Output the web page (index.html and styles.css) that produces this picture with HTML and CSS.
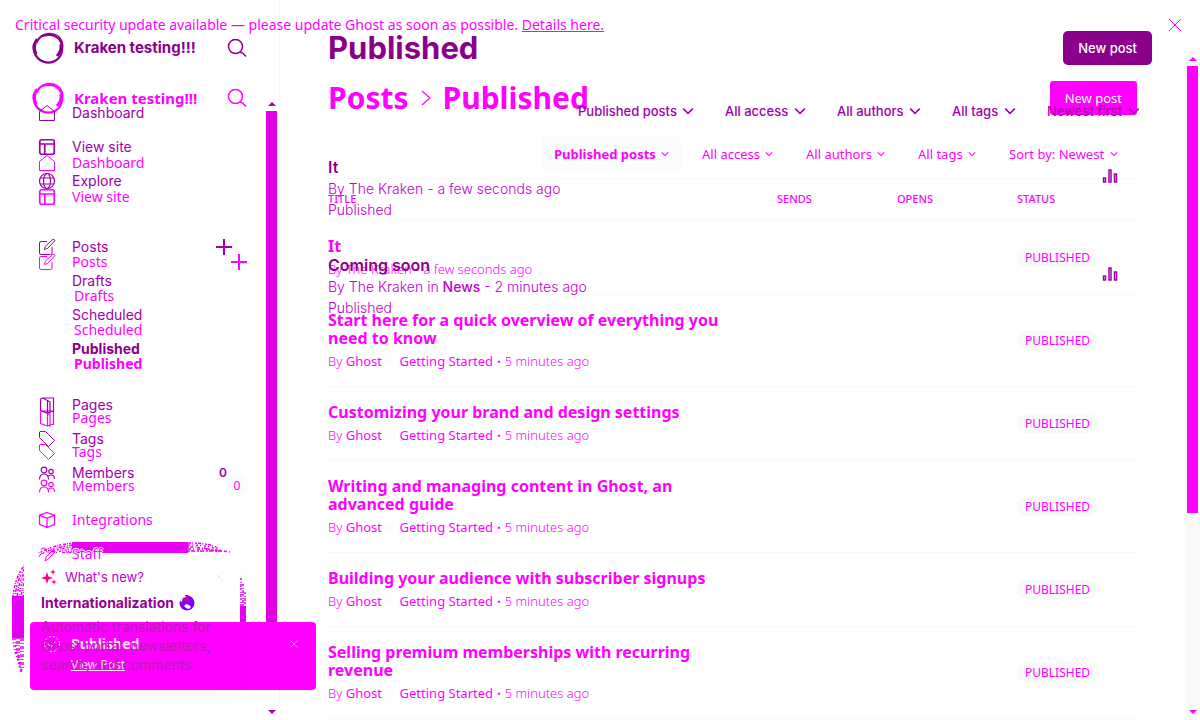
FILE: index.html
```html
<!DOCTYPE html>
<html lang="en">
<head>
<meta charset="utf-8">
<title>Published - Kraken testing!!!</title>
<link rel="stylesheet" href="styles.css">
</head>
<body>
<svg class="defs" aria-hidden="true">
  <symbol id="logo" viewBox="0 0 32 32"><g fill="none" stroke="currentColor"><path d="M5 7C-1 14 2 26 11 29.500s18-2 19-11S26 3 17 3 7 6 4 11" stroke-width="2.200"/><path d="M9 4C15 0 24 1 28 6s3 9 1.500 14M1.500 12c-2 9 4 17 12 18.500M12 3.500q8-2.500 14 3" stroke-width="1.300"/><path d="M29 12q1 7-4 12" stroke-width="3"/><path d="M3.500 11q-2 6 1 11" stroke-width="2.500"/></g></symbol>
  <symbol id="search" viewBox="0 0 20 20"><g fill="none" stroke="currentColor" stroke-width="1.500"><circle cx="8.500" cy="8.500" r="7"/><path d="M13 14q3 .5 6 4.500"/></g></symbol>
  <symbol id="home" viewBox="0 0 18 18"><path d="M1.500 7.500 9 1.500l7.500 6V16.500h-15z" fill="none" stroke="currentColor" stroke-linejoin="round"/></symbol>
  <symbol id="site" viewBox="0 0 18 18"><g fill="none" stroke="currentColor" stroke-width="1.700"><rect x="1.750" y="1.750" width="14.500" height="14.500" rx="2"/><path d="M2 6h14M6.750 6v10"/></g></symbol>
  <symbol id="globe" viewBox="0 0 18 18"><g fill="none" stroke="currentColor" stroke-width="1.200"><circle cx="9" cy="9" r="7.500"/><ellipse cx="9" cy="9" rx="3.500" ry="7.500"/><path d="M2 6h14M2 12h14"/></g></symbol>
  <symbol id="edit" viewBox="0 0 18 18"><path d="M9 3.500H3q-1.500 0-1.500 1.500v10q0 1.500 1.500 1.500h9.500q1.500 0 1.500-1.500V9M6.500 11.500l.8-3.200L15 1.200q1.500 0 1.800 1.600L9.500 10.500z" fill="none" stroke="currentColor"/></symbol>
  <symbol id="pages" viewBox="0 0 18 18"><path d="M2.500 3v11.500l7 2.500V4.500L4.500 2h11v13.500h-4M9.500 4.500 12 6v11l-2.500-1M2.500 3l2-1" fill="none" stroke="currentColor" stroke-width="1.200"/></symbol>
  <symbol id="tag" viewBox="0 0 18 18"><path d="M1.500 2v5.500l9 9 6-6L7.500 1.500H2z" fill="none" stroke="currentColor" stroke-linejoin="round"/></symbol>
  <symbol id="members" viewBox="0 0 18 18"><g fill="none" stroke="currentColor" stroke-width="1.200"><circle cx="6" cy="6" r="2.800"/><circle cx="13" cy="7.500" r="2.200"/><path d="M1.500 15.500Q1.500 10 6 10t4.500 5.500M10.500 12Q16.500 9 16.500 15"/></g></symbol>
  <symbol id="box" viewBox="0 0 18 18"><path d="M9 1.500l7.500 2.800v9L9 16.500l-7.500-3.200v-9zM1.500 4.300 9 7l7.500-2.700M9 7v9.500" fill="none" stroke="currentColor" stroke-width="1.300"/></symbol>
  <symbol id="staff" viewBox="0 0 18 18"><path d="M3 5a2.500 2.500 0 1 1 5 1M1 12q1-4 5-4M7 16l1-4 7-7q2 0 2 2l-7 7z" fill="none" stroke="currentColor"/></symbol>
  <symbol id="plus" viewBox="0 0 18 18"><path d="M9 1v16M1 9h16" stroke="currentColor" stroke-width="2"/></symbol>
  <symbol id="down" viewBox="0 0 10 10"><path d="M1 3l4 4 4-4" fill="none" stroke="currentColor" stroke-width="1.300"/></symbol>
  <symbol id="close" viewBox="0 0 14 14"><path d="M1 1l12 12M13 1 1 13" stroke="currentColor"/></symbol>
  <symbol id="bars" viewBox="0 0 16 14"><g fill="none" stroke="currentColor" stroke-width="1.500"><path d="M1.500 9h2v4h-2zM7 1h2v12H7zM12.500 5h2v8h-2z"/></g></symbol>
  <symbol id="up" viewBox="0 0 8 4"><path d="M0 4l4-4 4 4z" fill="currentColor"/></symbol>
  <symbol id="drop" viewBox="0 0 8 4"><path d="M0 0h8L4 4z" fill="currentColor"/></symbol>
</svg>

<div class="stage">
  <div class="layer current">
    <header class="banner">
      <p>Critical security update available — please update Ghost as soon as possible. <a href="#">Details here.</a></p>
      <button class="plain" aria-label="Dismiss alert"><svg width="14" height="14"><use href="#close"/></svg></button>
    </header>
    <div class="columns">
      <aside class="sidebar">
        <div class="halo" aria-hidden="true">
          <svg viewBox="0 0 236 132" width="236" height="132">
            <clipPath id="ring"><path d="M0 0H236V132H228V11H24Q12 11 12 23V132H0z"/></clipPath>
            <g fill="none" stroke="currentColor" clip-path="url(#ring)">
              <path d="M60 5.500H176" stroke-width="11"/>
              <path d="M6 54v42" stroke-width="12"/>
              <path d="M231 64v18" stroke-width="6"/>
              <g stroke-width="1.500">
                <path d="M1 56Q4 8 60 1" stroke-dasharray="3 1 1 1 2 2"/>
                <path d="M3 56Q6 10 60 3" stroke-dasharray="2 2 1 1 4 1"/>
                <path d="M5 56Q8 12 60 5" stroke-dasharray="1 1 3 2 2 1"/>
                <path d="M7 56Q10 14 60 7" stroke-dasharray="2 1 1 2"/>
                <path d="M9 56Q12 16 60 9" stroke-dasharray="1 2 3 1 1 1"/>
                <path d="M11 56Q14 18 60 10" stroke-dasharray="3 2 1 1"/>
                <path d="M176 1q22 0 30 5" stroke-dasharray="3 1 1 2 2 1"/>
                <path d="M176 3q22 0 34 6" stroke-dasharray="2 2 1 3"/>
                <path d="M176 5q18 0 30 5" stroke-dasharray="1 1 3 2"/>
                <path d="M176 7h20l22 3" stroke-dasharray="3 2 1 3"/>
                <path d="M176 9h36" stroke-dasharray="2 1 4 2"/>
                <path d="M1 96q1 14 5 22M3 96q1 18 6 34" stroke-dasharray="2 2 1 2"/>
                <path d="M5 96v14l5 20M7 96v26" stroke-dasharray="1 2 3 1"/>
                <path d="M9 96v34M11 96v32" stroke-dasharray="3 2 1 2"/>
                <path d="M229 36v28M231 42v22M233 50v14" stroke-dasharray="2 2 1 1 3 1"/>
              </g>
            </g>
          </svg>
        </div>
        <div class="brand">
          <svg width="32" height="32"><use href="#logo"/></svg><strong>Kraken testing!!!</strong>
          <button class="plain" aria-label="Search"><svg width="20" height="20"><use href="#search"/></svg></button>
        </div>
        <nav>
          <ul class="group">
            <li><a href="#"><svg class="ico"><use href="#home"/></svg>Dashboard</a></li>
            <li><a href="#"><svg class="ico"><use href="#site"/></svg>View site</a></li>
          </ul>
          <ul class="group posts">
            <li><a href="#"><svg class="ico"><use href="#edit"/></svg>Posts</a><button class="plain" aria-label="Add post"><svg width="18" height="18"><use href="#plus"/></svg></button></li>
            <li><a class="sub" href="#">Drafts</a></li>
            <li><a class="sub" href="#">Scheduled</a></li>
            <li><a class="sub on" href="#">Published</a></li>
          </ul>
          <ul class="group">
            <li><a href="#"><svg class="ico"><use href="#pages"/></svg>Pages</a></li>
            <li><a href="#"><svg class="ico"><use href="#tag"/></svg>Tags</a></li>
            <li><a href="#"><svg class="ico"><use href="#members"/></svg>Members</a><span class="count">0</span></li>
            <li><a href="#"><svg class="ico"><use href="#box"/></svg>Integrations</a></li>
            <li><a href="#"><svg class="ico"><use href="#staff"/></svg><span class="edge">Staff</span></a></li>
          </ul>
        </nav>
        <div class="scroll side" aria-hidden="true"><svg width="8" height="4"><use href="#up"/></svg><i></i><svg width="8" height="4"><use href="#drop"/></svg></div>
      </aside>
      <main>
        <div class="heading">
          <h1>Posts <svg width="10" height="16" viewBox="0 0 10 16"><path d="M1 1l8 7-8 7" fill="none" stroke="currentColor" stroke-width="1.200"/></svg> Published</h1>
          <button class="new">New post</button>
        </div>
        <div class="filters">
          <label class="picked"><select aria-label="Post type"><option>Published posts</option></select><svg width="8" height="8"><use href="#down"/></svg></label>
          <label><select aria-label="Access"><option>All access</option></select><svg width="8" height="8"><use href="#down"/></svg></label>
          <label><select aria-label="Author"><option>All authors</option></select><svg width="8" height="8"><use href="#down"/></svg></label>
          <label><select aria-label="Tag"><option>All tags</option></select><svg width="8" height="8"><use href="#down"/></svg></label>
          <label><select aria-label="Order"><option>Sort by: Newest</option></select><svg width="8" height="8"><use href="#down"/></svg></label>
        </div>
        <table>
          <thead><tr><th>TITLE</th><th class="num">SENDS</th><th class="num">OPENS</th><th class="num">STATUS</th></tr></thead>
          <tbody>
            <tr><td><h3>It</h3><p>By The Kraken • a few seconds ago</p></td><td></td><td></td><td><span class="badge">PUBLISHED</span></td></tr>
            <tr><td><h3>Start here for a quick overview of everything you need to know</h3><p>By <b>Ghost</b> <i>in</i> <b>Getting Started</b> • 5 minutes ago</p></td><td></td><td></td><td><span class="badge">PUBLISHED</span></td></tr>
            <tr><td><h3>Customizing your brand and design settings</h3><p>By <b>Ghost</b> <i>in</i> <b>Getting Started</b> • 5 minutes ago</p></td><td></td><td></td><td><span class="badge">PUBLISHED</span></td></tr>
            <tr><td><h3>Writing and managing content in Ghost, an advanced guide</h3><p>By <b>Ghost</b> <i>in</i> <b>Getting Started</b> • 5 minutes ago</p></td><td></td><td></td><td><span class="badge">PUBLISHED</span></td></tr>
            <tr><td><h3>Building your audience with subscriber signups</h3><p>By <b>Ghost</b> <i>in</i> <b>Getting Started</b> • 5 minutes ago</p></td><td></td><td></td><td><span class="badge">PUBLISHED</span></td></tr>
            <tr><td><h3>Selling premium memberships with recurring revenue</h3><p>By <b>Ghost</b> <i>in</i> <b>Getting Started</b> • 5 minutes ago</p></td><td></td><td></td><td><span class="badge">PUBLISHED</span></td></tr>
          </tbody>
        </table>
      </main>
      <div class="scroll page" aria-hidden="true"><svg width="8" height="4"><use href="#up"/></svg><i></i><svg width="8" height="4"><use href="#drop"/></svg></div>
    </div>
    <div class="toast" role="status">
      <svg width="18" height="18" viewBox="0 0 18 18"><g fill="none" stroke="currentColor"><circle cx="9" cy="9" r="7.500" stroke-dasharray="2 2"/><path d="M5 9l3 3 5-6" stroke-dasharray="3 1"/></g></svg>
      <div><strong>Published</strong><a href="#">View Post</a></div>
      <button class="plain" aria-label="Close notification"><svg width="8" height="8"><use href="#close"/></svg></button>
    </div>
  </div>

  <div class="layer previous">
    <aside class="sidebar">
      <div class="brand">
        <svg width="32" height="32"><use href="#logo"/></svg><strong>Kraken testing!!!</strong>
        <button class="plain" aria-label="Search"><svg width="20" height="20"><use href="#search"/></svg></button>
      </div>
      <nav>
        <ul class="group">
          <li><a href="#"><svg class="ico"><use href="#home"/></svg>Dashboard</a></li>
          <li><a href="#"><svg class="ico"><use href="#site"/></svg>View site</a></li>
          <li><a href="#"><svg class="ico"><use href="#globe"/></svg>Explore</a></li>
        </ul>
        <ul class="group posts">
          <li><a href="#"><svg class="ico"><use href="#edit"/></svg>Posts</a><button class="plain" aria-label="Add post"><svg width="18" height="18"><use href="#plus"/></svg></button></li>
          <li><a class="sub" href="#">Drafts</a></li>
          <li><a class="sub" href="#">Scheduled</a></li>
          <li><a class="sub on" href="#">Published</a></li>
        </ul>
        <ul class="group">
          <li><a href="#"><svg class="ico"><use href="#pages"/></svg>Pages</a></li>
          <li><a href="#"><svg class="ico"><use href="#tag"/></svg>Tags</a></li>
          <li><a href="#"><svg class="ico"><use href="#members"/></svg>Members</a><span class="count">0</span></li>
        </ul>
      </nav>
      <section class="news">
        <header>
          <svg width="16" height="16" viewBox="0 0 16 16"><path d="M6 3l1.500 4.500L12 9l-4.500 1.500L6 15l-1.500-4.500L0 9l4.500-1.500zM12 0l.8 2.200L15 3l-2.200.8L12 6l-.8-2.200L9 3l2.200-.8zM13 10l.7 2.300L16 13l-2.300.7L13 16l-.7-2.300L10 13l2.300-.7z" fill="#ff0080"/></svg>
          <span>What's new?</span>
          <button class="plain" aria-label="Close news"><svg width="10" height="10"><use href="#close"/></svg></button>
        </header>
        <h2>Internationalization <svg width="16" height="16" viewBox="0 0 16 16"><circle cx="8" cy="8" r="7.500" fill="#8000ff"/><path d="M1 6Q2 1 7 0l0 3-3 1-1 3z" fill="#f0eef2"/><path d="M6 0l3 0 1 3 1 3-3 1-3-2-2 1 1-3 3-1z" fill="#c000b0"/><path d="M7 9l3 1 2 2-2 2-3-1-2-2z" fill="#fff"/></svg></h2>
        <p>Automatic translations for Ghost portal, newsletters, search, and comments.</p>
      </section>
    </aside>
    <main>
      <div class="heading"><h1>Published</h1><button class="new">New post</button></div>
      <div class="filters">
        <label><select aria-label="Post type"><option>Published posts</option></select><svg width="12" height="12"><use href="#down"/></svg></label>
        <label><select aria-label="Access"><option>All access</option></select><svg width="12" height="12"><use href="#down"/></svg></label>
        <label><select aria-label="Author"><option>All authors</option></select><svg width="12" height="12"><use href="#down"/></svg></label>
        <label><select aria-label="Tag"><option>All tags</option></select><svg width="12" height="12"><use href="#down"/></svg></label>
        <label class="order"><select aria-label="Order"><option>Newest first</option></select><svg width="12" height="12"><use href="#down"/></svg></label>
      </div>
      <article class="post">
        <div><h3>It</h3><p>By The Kraken - a few seconds ago</p><p>Published</p></div>
        <svg width="16" height="14"><use href="#bars"/></svg>
      </article>
      <article class="post">
        <div><h3>Coming soon</h3><p>By The Kraken in <b>News</b> - 2 minutes ago</p><p>Published</p></div>
        <svg width="16" height="14"><use href="#bars"/></svg>
      </article>
    </main>
  </div>
</div>
</body>
</html>
```
FILE: styles.css
```css
* { box-sizing: border-box; }
body { margin: 0; background: #fff; }
h1, h2, h3, p, ul { margin: 0; padding: 0; }
ul { list-style: none; }
a { color: inherit; text-decoration: none; }
svg { display: block; flex: none; }
button, select { font: inherit; color: inherit; border: 0; background: none; padding: 0; margin: 0; }
select { appearance: none; }
.defs { position: absolute; width: 0; height: 0; }

.stage { display: grid; grid-template-columns: minmax(0, 1fr); height: 100vh; overflow: hidden; }
.layer { grid-area: 1 / 1; min-width: 0; min-height: 0; position: relative; }
.current { display: flex; flex-direction: column; color: #f0f; font: 14px/18px "Noto Sans", sans-serif; }
.previous { display: flex; color: #a000a8; font: 14px/18px Inter, sans-serif; }

.banner { display: flex; justify-content: space-between; align-items: center; height: 50px; flex: none; padding: 0 18px 0 15px; }
.banner a { text-decoration: underline; }
.columns { display: flex; flex: 1; min-height: 0; }

/* Sidebar */
.sidebar { position: relative; width: 280px; flex: none; border-right: 1px solid rgba(0, 0, 0, .03); }
.current .sidebar { border-color: transparent; }
.brand { display: flex; align-items: center; gap: 10px; height: 96px; padding: 0 32px; font-size: 15px; }
.brand strong { flex: 1; white-space: nowrap; }
.previous .brand { color: #8b008b; }
.group li { display: flex; align-items: center; justify-content: space-between; height: 34px; padding: 0 46px 0 38px; }
.group a { display: flex; align-items: center; gap: 16px; }
.ico { width: 18px; height: 18px; }
.group .sub { padding-left: 34px; }
.group .on { font-weight: 700; }
.previous .on { color: #8b008b; }
.previous .posts { margin: 32px 0 22px; }
.previous .count { padding-right: 6px; font-size: 12px; font-weight: 600; }
.current .group li { padding-right: 31px; }
.current .group .sub { padding-left: 36px; }
.current .posts { margin: 31px 0 20px; }
.current .count { width: 22px; height: 22px; border-radius: 11px; background: #fafcfb; font-size: 12px; line-height: 22px; text-align: center; }
.halo { position: absolute; left: 12px; bottom: 46px; color: #e800f5; }
.edge { position: relative; text-shadow: 1px 0 #fff, -1px 0 #fff, 0 1px #fff, 0 -1px #fff; }

/* Scroll bars */
.scroll { display: flex; flex-direction: column; align-items: center; width: 15px; padding: 7px 0 6px; }
.scroll i { width: 11px; margin: 5px 0 auto; background: #f0f; }
.page { flex: none; background: #fafafa; }
.page i { height: 68%; }
.side { position: absolute; top: 52px; right: 0; bottom: 0; padding: 0 0 6px; color: #b000b0; }
.side i { height: 530px; background: #e000e0; }

/* Main column */
main { flex: 1; min-width: 0; padding: 0 48px; }
.heading { display: flex; justify-content: space-between; align-items: center; height: 96px; }
.heading h1 { display: flex; align-items: center; gap: 12px; font-size: 30px; line-height: 36px; font-weight: 700; }
.heading .new { height: 34px; padding: 0 15px; background: #f0f; color: #fff; border-radius: 3px; font-size: 13px; }
.previous .heading h1 { font-size: 31px; color: #8b008b; }
.previous .heading .new { background: #8b008b; border-radius: 5px; font-weight: 500; }
.filters { display: flex; justify-content: flex-end; align-items: center; white-space: nowrap; }
.filters label { display: flex; align-items: center; }
.current .filters { height: 34px; margin: -9px 0 7px; gap: 9px; padding-right: 7px; font-size: 13px; }
.current .filters label { gap: 5px; height: 34px; padding: 0 12px; }
.current .filters .picked { background: #fafcfb; font-weight: 700; }
.previous .filters { height: 30px; gap: 31px; padding-right: 12px; font-size: 13px; font-weight: 500; }
.previous .filters label { gap: 5px; }
.previous .order { color: #b000a8; }

table { width: 100%; border-collapse: collapse; table-layout: fixed; }
tr { border-bottom: 1px solid #f9f9f9; }
thead tr { border-top: 1px solid #f9f9f9; }
th { height: 42px; padding: 0 0 2px; text-align: left; font-size: 11px; line-height: 16px; font-weight: 500; }
.num { width: 120px; }
td { padding: 16px 0; vertical-align: middle; }
td:first-child { padding-right: 48px; }
td h3 { margin-bottom: 5px; font-size: 16px; line-height: 18px; font-weight: 700; }
td p { font-size: 13px; line-height: 18px; font-weight: 300; }
td b { font-weight: 400; }
td p i { color: #fff0ff; font-style: normal; }
.badge { display: inline-block; padding: 0 8px; border-radius: 10px; background: #f9f9f9; font-size: 12px; line-height: 19px; }

.post { display: flex; justify-content: space-between; align-items: flex-start; height: 98px; padding: 32px 34px 0 0; }
.post h3 { padding-bottom: 1px; font-size: 16px; line-height: 19px; font-weight: 600; color: #8b008b; }
.post p { font-size: 14px; line-height: 21px; font-weight: 300; color: #c000cc; }
.post b { font-weight: 500; }
.post > svg { margin-top: 11px; }

/* Overlays */
.news { position: absolute; left: 25px; bottom: 30px; width: 215px; padding: 16px 16px 16px; border-radius: 8px; box-shadow: 0 12px 24px rgba(0, 0, 0, .03); }
.news header { display: flex; align-items: center; gap: 8px; font-size: 13px; line-height: 18px; color: #c000cc; }
.news header span { flex: 1; }
.news header button { color: #e4e4e4; }
.news h2 { display: flex; align-items: center; gap: 5px; margin: 7px 0 4px; font-size: 14px; line-height: 20px; font-weight: 700; color: #960096; }
.news p { font-size: 14px; line-height: 19px; color: #b020b0; }
.toast { position: absolute; left: 30px; bottom: 30px; display: flex; align-items: flex-start; gap: 10px; width: 286px; height: 68px; padding: 13px 18px 0 13px; border-radius: 4px; background: #f0f; color: #ffe6ff; font-size: 14px; }
.toast div { display: flex; flex: 1; flex-direction: column; align-items: flex-start; gap: 3px; }
.toast a { font-size: 12px; text-decoration: underline; }
.toast button { padding-top: 5px; }
```
